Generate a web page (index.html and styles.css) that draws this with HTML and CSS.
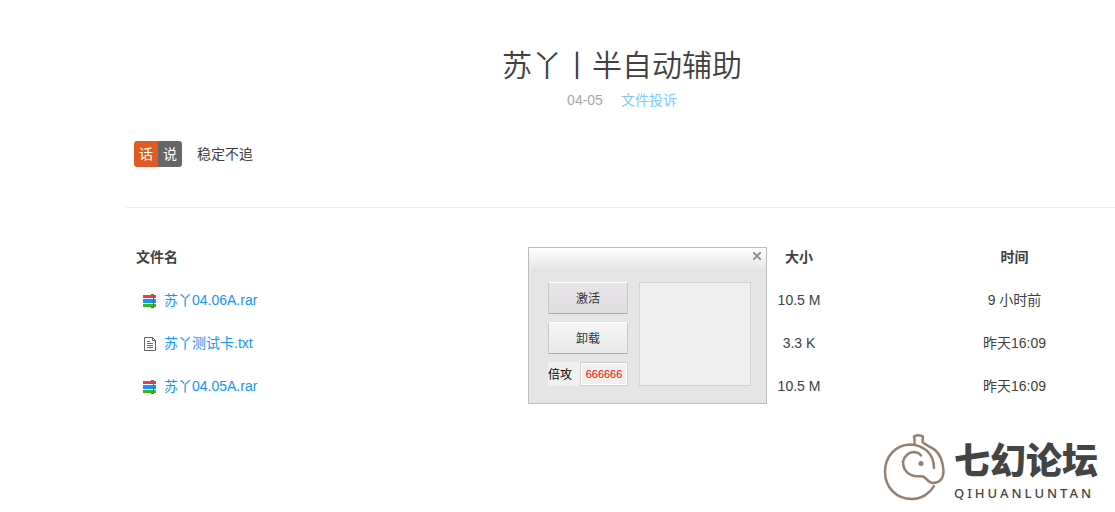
FILE: index.html
```html
<!DOCTYPE html>
<html lang="zh-CN">
  <head>
    <meta charset="UTF-8" />
    <meta name="viewport" content="width=device-width, initial-scale=1.0" />
    <title>苏丫丨半自动辅助</title>
    <link rel="stylesheet" href="styles.css">
  </head>
  <body>
    <main class="page">
      <header class="header">
        <h1>苏丫丨半自动辅助</h1>
        <div class="meta">
          <span>04-05</span>
          <a href="#">文件投诉</a>
        </div>
      </header>

      <section class="intro">
        <div class="tag"><span class="tag-left">话</span><span class="tag-right">说</span></div>
        <p>稳定不追</p>
      </section>

      <section class="files">
        <table>
          <thead>
            <tr>
              <th class="name">文件名</th>
              <th class="size">大小</th>
              <th class="time">时间</th>
            </tr>
          </thead>
          <tbody>
            <tr>
              <td class="name">
                <a href="#"><svg class="icon" width="14" height="14" viewBox="0 0 14 14" shape-rendering="crispEdges"><path fill="#fb3440" d="M0 1h13v3H0z"/><path fill="#1296fa" d="M0 5h13v4H0z"/><path fill="#41b31f" d="M0 10h13v3H0z"/><path fill="#666" d="M8 0h3v14H8v-1h2V1H8z"/></svg>苏丫04.06A.rar</a>
              </td>
              <td>10.5 M</td>
              <td>9 小时前</td>
            </tr>
            <tr>
              <td class="name">
                <a href="#"><svg class="icon" width="14" height="14" viewBox="0 0 14 14" fill="none" stroke="#666"><path d="M1.500.5h8l3 3v10h-11zM9.500.5v3h3M4 4.500h3M4 6.500h6M4 8.500h6M4 10.500h6"/></svg>苏丫测试卡.txt</a>
              </td>
              <td>3.3 K</td>
              <td>昨天16:09</td>
            </tr>
            <tr>
              <td class="name">
                <a href="#"><svg class="icon" width="14" height="14" viewBox="0 0 14 14" shape-rendering="crispEdges"><path fill="#fb3440" d="M0 1h13v3H0z"/><path fill="#1296fa" d="M0 5h13v4H0z"/><path fill="#41b31f" d="M0 10h13v3H0z"/><path fill="#666" d="M8 0h3v14H8v-1h2V1H8z"/></svg>苏丫04.05A.rar</a>
              </td>
              <td>10.5 M</td>
              <td>昨天16:09</td>
            </tr>
          </tbody>
        </table>

        <!-- tool window floating over the list -->
        <div class="window">
          <div class="titlebar">
            <button class="close" type="button" aria-label="关闭">
              <svg width="8" height="8" viewBox="0 0 8 8" fill="#999" shape-rendering="crispEdges"><path d="M0 0h2v1h1v1h2V1h1V0h2v2H7v1H6v2h1v1h1v2H6V7H5V6H3v1H2v1H0V6h1V5h1V3H1V2H0z"/></svg>
            </button>
          </div>
          <div class="window-body">
            <div class="controls">
              <button class="btn active" type="button">激活</button>
              <button class="btn" type="button">卸载</button>
              <div class="field">
                <label for="attack">倍攻</label>
                <input type="text" id="attack" value="666666">
              </div>
            </div>
            <textarea class="log" aria-label="日志" readonly></textarea>
          </div>
        </div>
      </section>

      <footer class="brand">
        <svg class="brand-logo" width="62" height="68" viewBox="0 0 62 68" fill="none" stroke="#938070" stroke-width="2.500" stroke-linecap="round" stroke-linejoin="round">
          <path d="M51 52C47 59 39 65 29 65C13 65 2 53 2 38C2 22 13 11 27 10.500C41 11 51 20 51 34"/>
          <path d="M31.500 10V5L31 2.500Q35 0 40 2.500L39.500 8C42 11 47 12 52 16C58 21 60 29 60.500 37C60.500 44 57 49 50 49C45 49 44 44 40 42.500C36 41.500 34 43.500 28 41C22 38 20 33 20 28C21 22 26 18 31 18Q36 18.500 38 21.500"/>
          <circle cx="38" cy="29.500" r="2.500" fill="#938070" stroke="none"/>
        </svg>
        <div class="brand-text">
          <strong>七幻论坛</strong>
          <span>QIHUANLUNTAN</span>
        </div>
      </footer>
    </main>
  </body>
</html>
```
FILE: styles.css
```css
body {
  margin: 0;
  background-color: #fff;
  color: #404040;
  font-family: "Liberation Sans", "Noto Sans CJK SC", sans-serif;
  font-size: 14px;
  line-height: 20px;
}

a {
  color: #1296fa;
  text-decoration: none;
}

.page {
  margin-left: 126px;
}

.header {
  padding: 46px 0 0 3px;
  text-align: center;
}

h1 {
  margin: 0;
  font-size: 30px;
  font-weight: 350;
  line-height: 40px;
}

.meta {
  display: flex;
  justify-content: center;
  gap: 18px;
  margin-top: 4px;
  color: #a6a6a6;
}

.meta a {
  color: #85c8fc;
}

.intro {
  display: flex;
  align-items: center;
  gap: 15px;
  padding: 31px 8px 40px;
  border-bottom: 1px solid #ececec;
}

.intro p {
  margin: 0;
}

.tag {
  display: flex;
  border-radius: 3px;
  overflow: hidden;
  color: #fff;
  line-height: 26px;
  text-align: center;
}

.tag span {
  width: 24px;
}

.tag-left {
  background-color: #e05a24;
}

.tag-right {
  background-color: #666;
}

/* file list */
.files {
  position: relative;
  padding-top: 27px;
}

table {
  width: 100%;
  border-collapse: collapse;
  table-layout: fixed;
}

th,
td {
  height: 43px;
  padding: 0 10px;
  box-sizing: border-box;
  text-align: center;
}

th.size {
  width: 230px;
}

th.time {
  width: 201px;
}

.name {
  text-align: left;
}

td.name {
  padding-left: 17px;
}

td a {
  display: flex;
  align-items: center;
  gap: 7px;
}

.icon {
  margin-top: 3px;
}

/* tool window */
.window {
  position: absolute;
  top: 39px;
  left: 402px;
  width: 239px;
  box-sizing: border-box;
  border: 1px solid #bcbcbc;
  background-color: #e5e5e5;
  color: #333;
  font-size: 12px;
}

.titlebar {
  display: flex;
  justify-content: flex-end;
  height: 22px;
  background: linear-gradient(#fff, #e5e5e5);
}

.close {
  display: flex;
  padding: 4px 5px;
  border: none;
  background: none;
}

.window-body {
  display: flex;
  gap: 11px;
  margin-left: 3px;
  padding: 11px 15px 17px;
  border-top: 1px solid #dfdfdf;
  border-left: 1px solid #dfdfdf;
}

.controls {
  display: flex;
  flex-direction: column;
  gap: 8px;
  width: 80px;
}

.btn {
  height: 32px;
  padding: 1px 0 0;
  border: 1px solid #c8c8c8;
  border-top-color: #fff;
  border-bottom-color: #aaa;
  border-radius: 1px;
  background: linear-gradient(#f7f7f7, #e9e9e9);
  color: #333;
  font: inherit;
}

.btn.active {
  background: linear-gradient(#e8e5e9, #dfdce0);
}

.field {
  display: flex;
  height: 24px;
}

.field label {
  width: 32px;
  background-color: #f0f0f0;
  color: #000;
  line-height: 26px;
}

.field input {
  flex: 1;
  min-width: 0;
  padding: 0;
  border: 1px solid #d2d2d2;
  background-color: #f0f0f0;
  box-shadow: inset 0 0 0 1px #fff;
  color: #f00;
  font-family: inherit;
  font-size: 11px;
  text-align: center;
}

.log {
  flex: 1;
  min-width: 0;
  padding: 0;
  border: 1px solid #d2d2d2;
  background-color: #efefef;
  resize: none;
}

/* forum logo */
.brand {
  display: flex;
  justify-content: flex-end;
  gap: 9px;
  padding: 27px 17px 8px;
}

.brand-text {
  display: flex;
  flex-direction: column;
  padding-top: 7px;
  color: #444;
}

.brand-text strong {
  font-size: 36px;
  font-weight: 900;
  line-height: 42px;
}

.brand-text span {
  font-family: "Noto Sans", sans-serif;
  font-size: 13px;
  font-weight: 500;
  letter-spacing: 3px;
  line-height: 20px;
}
```
